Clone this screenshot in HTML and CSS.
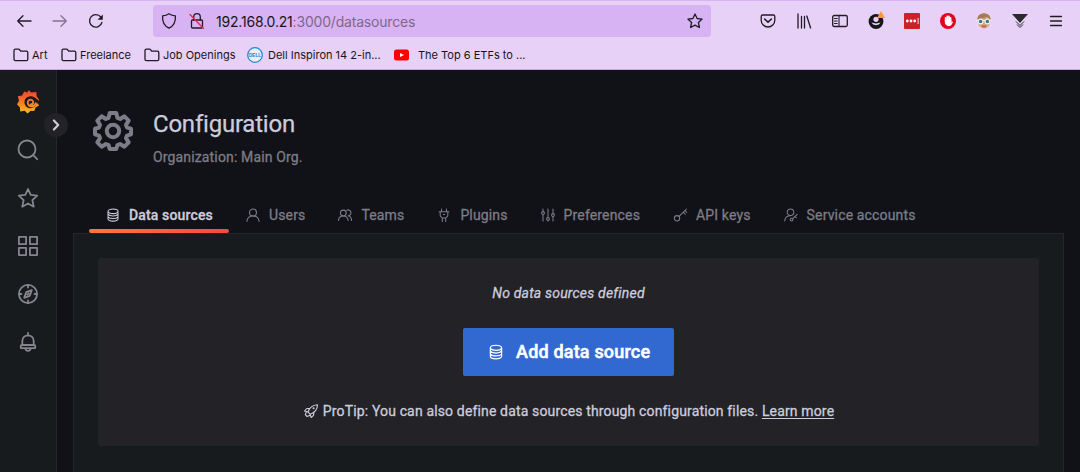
FILE: index.html
```html
<!DOCTYPE html>
<html lang="en">
<head>
<meta charset="utf-8">
<title>Configuration: Data sources</title>
<link rel="stylesheet" href="styles.css">
</head>
<body>
<svg class="defs" width="0" height="0">
  <symbol id="database" viewBox="0 0 16 16"><path d="M3 4.300C3 3 5.200 2 8 2s5 1 5 2.300-2.200 2.300-5 2.300-5-1-5-2.300zM3 4.300v7.500C3 13.100 5.200 14.100 8 14.100s5-1 5-2.300V4.300M3 7.200c.8 1 2.700 1.700 5 1.700s4.200-.7 5-1.700M3 9.800c.8 1 2.700 1.700 5 1.700s4.200-.7 5-1.700"/></symbol>
  <symbol id="folder" viewBox="0 0 16 14"><path d="M1 11.200V2.600C1 1.700 1.600 1.200 2.400 1.200h3.200c.5 0 .8.2 1.100.6l.9 1.300h5.800c.8 0 1.400.6 1.400 1.400v6.700c0 .8-.6 1.400-1.400 1.400H2.400c-.8 0-1.400-.6-1.400-1.400z"/></symbol>
</svg>

<header class="browser">
  <div class="toolbar">
    <nav class="history">
      <svg class="ic" width="16" height="16" viewBox="0 0 16 16"><path d="M15 8H1.700M7 2.700L1.700 8 7 13.300"/></svg>
      <svg class="ic faded" width="16" height="16" viewBox="0 0 16 16"><path d="M1 8h13.300M9 2.700L14.300 8 9 13.300"/></svg>
      <svg class="ic" width="16" height="16" viewBox="0 0 16 16"><path d="M13.900 9.500A6.300 6.300 0 1 1 12.800 4"/><path class="solid" d="M14.800 1.500v5.200H9.600z"/></svg>
    </nav>
    <div class="urlbar">
      <svg class="ic" width="16" height="16" viewBox="0 0 16 16"><path d="M8 .8c2 1.400 4 2 6.400 2.100.4 5.500-1.500 10-6.400 12.300C3.100 12.900 1.200 8.400 1.600 2.900 4 2.800 6 2.200 8 .8z"/></svg>
      <svg class="ic lock" width="16" height="16" viewBox="0 0 16 16"><rect x="2.500" y="7" width="11" height="8" rx="1"/><path d="M4.700 7V4a3.300 3.300 0 0 1 6.600 0v3"/><path class="slash" d="M1 1.500l13.500 14"/></svg>
      <span class="url"><b>192.168.0.21</b>:3000/datasources</span>
      <svg class="ic star" width="16" height="16" viewBox="0 0 16 16"><path d="M8 1l2.100 4.500 5 .6-3.700 3.400 1 5L8 12.100l-4.400 2.400 1-5L.9 6.100l5-.6z"/></svg>
    </div>
    <div class="extensions">
      <svg class="ic" width="16" height="16" viewBox="0 0 16 16"><path d="M2.600 2h10.800c.8 0 1.400.6 1.400 1.400v3.800a6.800 6.800 0 0 1-13.600 0V3.400C1.200 2.600 1.800 2 2.600 2z"/><path d="M4.600 6L8 9.200 11.400 6" stroke-width="1.600"/></svg>
      <svg class="ic" width="16" height="16" viewBox="0 0 16 16"><path d="M2 1v14M5.500 3.500V15M8.500 3.500V15M10.800 3l3.800 12"/></svg>
      <svg class="ic" width="16" height="16" viewBox="0 0 16 16"><rect x=".7" y="2.500" width="14.600" height="11" rx="1.500"/><path d="M7 2.500v11M2.500 5.500h2.700M2.500 8h2.700M2.500 10.500h2.700" stroke-width="1.100"/></svg>
      <svg class="account" width="18" height="18" viewBox="0 0 18 18"><circle cx="9" cy="10.500" r="7.400" fill="#18141c"/><circle cx="9" cy="8.300" r="2.600" fill="#e8d1f6"/><path d="M4.400 11.600l4.600.9 4.600-.9a4.900 4 0 0 1-9.200 0z" fill="#e8d1f6"/><path d="M14 0l4 7H10z" fill="#ff9637"/></svg>
      <svg width="16" height="16" viewBox="0 0 16 16"><rect width="16" height="16" rx="1" fill="#cb2128"/><g fill="#fff"><circle cx="3.300" cy="8" r="1.400"/><circle cx="7" cy="8" r="1.400"/><circle cx="10.700" cy="8" r="1.400"/><path d="M13.700 5h.8v6h-.8z"/></g></svg>
      <svg width="16" height="16" viewBox="0 0 16 16"><circle cx="8" cy="8" r="8" fill="#df0620"/><path d="M5.600 8V4.700M7.300 8V3.300M9 8V3.300M10.600 9V4.700" stroke="#fff" stroke-width="1.600" stroke-linecap="round"/><path d="M4.800 7h6.600v2.700l.9-1.200.8.600-1.900 3.200c-.9 1-3.300 1.100-4.400.3-1.400-.9-2-2.100-2-3.600z" fill="#fff"/></svg>
      <svg width="16" height="16" viewBox="0 0 16 16"><path d="M8 .5c4 0 6.500 2.500 6.500 6.500 0 4.800-3 8.500-6.500 8.500S1.500 11.800 1.500 7C1.500 3 4 .5 8 .5z" fill="#d99a78"/><path d="M1.500 6.500C1.500 2.500 4 .5 8 .5s6.500 2 6.500 6L11 3.800 7 5z" fill="#a57b55"/><path d="M.5 7.500h15" stroke="#eee9e8"/><circle cx="4.600" cy="8.500" r="2.400" fill="#387d86" stroke="#edf2ed" stroke-width="1.200"/><circle cx="11.400" cy="8.500" r="2.400" fill="#387d86" stroke="#edf2ed" stroke-width="1.200"/><path d="M6 13q2 1 4 0" fill="none" stroke="#954e48"/></svg>
      <svg width="16" height="16" viewBox="0 0 16 16"><path d="M0 1h16L8 10z" fill="#2a292d"/><path d="M4 8.500l4 4 4-4M5 11.500l3 3 3-3" fill="none" stroke="#343038"/></svg>
      <svg class="ic" width="16" height="16" viewBox="0 0 16 16"><path d="M2.500 3.500h11M2.500 8h11M2.500 12.500h11"/></svg>
    </div>
  </div>
  <div class="bookmarks">
    <a class="bm art"><svg class="ic" width="16" height="14"><use href="#folder"/></svg><span>Art</span></a>
    <a class="bm free"><svg class="ic" width="16" height="14"><use href="#folder"/></svg><span>Freelance</span></a>
    <a class="bm jobs"><svg class="ic" width="16" height="14"><use href="#folder"/></svg><span>Job Openings</span></a>
    <a class="bm dell"><svg width="16" height="16" viewBox="0 0 16 16"><circle cx="8" cy="8" r="7.300" fill="#e8eefb" stroke="#2588c8" stroke-width="1.300"/><text class="dell-logo" x="8" y="10" text-anchor="middle" textLength="12" lengthAdjust="spacingAndGlyphs">DELL</text></svg><span>Dell Inspiron 14 2-in...</span></a>
    <a class="bm tube"><svg width="15" height="16" viewBox="0 0 15 16"><rect y="2.500" width="15" height="11" rx="2.500" fill="#f00"/><path d="M6 6l4 2-4 2z" fill="#fff"/></svg><span>The Top 6 ETFs to ...</span></a>
  </div>
</header>

<div class="app">
  <aside class="sidebar">
    <svg class="logo" width="24" height="26" viewBox="0 0 24 26">
      <defs><linearGradient id="flame" gradientUnits="userSpaceOnUse" x1="0" y1="1" x2="0" y2="25"><stop offset="0" stop-color="#f0402c"/><stop offset=".5" stop-color="#f5782b"/><stop offset="1" stop-color="#fcc21d"/></linearGradient></defs>
      <path fill="url(#flame)" d="M12.800 1l2.300 2.400 5.200-.4.400 4.400 2.300 3-.3 2-.6 2.400.9 2-3.300 1.500-1.500 3.700-3.600-.2-3 2.700-2.900-2.700-4.500.8-.3-4.200L1 15.200l2-3.500L1.800 7.300l4.300-.7L8.200 2.500l3 1.100z"/>
      <path fill="#181b1e" d="M23.500 12.600C21 9.800 18.400 7.200 14.500 7.200a6 6 0 1 0 5.800 7.200l3.200.2z"/>
      <path fill="none" stroke="url(#flame)" stroke-width="1.900" stroke-linecap="round" d="M14.700 15.400c1.500.1 2.600-1 2.500-2.400-.2-1.600-1.500-2.400-3-2.200-1.800.3-2.800 1.900-2.400 3.600.5 2 2.200 3.200 4.300 2.900 2-.3 3.300-1.500 3.800-3.200"/>
    </svg>
    <svg class="nav" width="24" height="24" viewBox="0 0 24 24"><circle cx="11" cy="11" r="8.500"/><path d="M17.200 17.200l4 4"/></svg>
    <svg class="nav" width="24" height="24" viewBox="0 0 24 24"><path d="M12 3l2.700 5.900 6.500.8-4.800 4.500 1.300 6.500-5.700-3.200-5.700 3.200 1.300-6.500-4.800-4.500 6.500-.8z"/></svg>
    <svg class="nav" width="24" height="24" viewBox="0 0 24 24"><path d="M2.900 2.900h7.200v7.200H2.900zM13.900 2.900h7.200v7.200h-7.200zM2.900 13.900h7.200v7.200H2.900zM13.900 13.900h7.200v7.200h-7.200z"/></svg>
    <svg class="nav" width="24" height="24" viewBox="0 0 24 24"><circle cx="12" cy="12" r="9.100"/><path d="M12 3v2.500M12 18.500V21M3 12h2.500M18.500 12H21M15.800 8.200l-2 5.600-5.600 2 2-5.600zM11.300 12.700l1.400-1.400"/></svg>
    <svg class="nav" width="24" height="24" viewBox="0 0 24 24"><path d="M12 3v2.500M6.300 15V11a5.700 5.700 0 0 1 11.400 0v4M5.900 15h12.200c.6 0 1.100.5 1.100 1.100v2H4.800v-2c0-.6.500-1.100 1.100-1.100zM9.200 18.500c.5 1.600 1.600 2.300 2.800 2.300s2.300-.7 2.800-2.300"/></svg>
    <button class="expand"><svg width="24" height="24" viewBox="0 0 24 24"><path d="M9.900 7.500l4.300 4.500-4.300 4.500" fill="none" stroke="#ccccdc" stroke-width="2.200" stroke-linecap="round" stroke-linejoin="round"/></svg></button>
  </aside>

  <main class="content">
    <div class="page-header">
      <svg class="gear" width="40" height="40" viewBox="0 0 40 40"><path d="M16.700 2h6.600l1.100 4.900 2.700 1.100 4.300-2.700 4.300 4.300-2.700 4.300 1.100 2.700 3.900 1.100v5.600L34 24.600l-1 2.500 2.700 4.300-4.300 4.300-4.300-2.700-2.700 1.100-1.100 3.900h-6.600l-1.100-3.900-2.700-1.100-4.300 2.700-4.300-4.300L7 27.100l-1-2.500-4-1.300v-5.600l4-1.100 1-2.700-2.700-4.300 4.300-4.300L12.900 8l2.700-1.100z"/><circle cx="20" cy="20" r="6.200"/></svg>
      <div class="heading"><h1>Configuration</h1><p>Organization: Main Org.</p></div>
    </div>
    <nav class="tabs">
      <a class="tab active"><svg width="16" height="16"><use href="#database"/></svg><span>Data sources</span></a>
      <a class="tab"><svg width="16" height="16" viewBox="0 0 16 16"><circle cx="8" cy="5.500" r="3.500"/><path d="M1.900 14.500C2.200 11.300 4.700 9 8 9s5.800 2.300 6.100 5.500"/></svg><span>Users</span></a>
      <a class="tab"><svg width="16" height="16" viewBox="0 0 16 16"><circle cx="6.300" cy="6" r="2.900"/><path d="M1.500 13.500c.2-2.700 2.200-4.600 4.800-4.600s4.600 1.900 4.800 4.600M9.800 3.200a2.900 2.900 0 1 1 1.300 5.500c2.100.4 3.400 2.300 3.500 4.800"/></svg><span>Teams</span></a>
      <a class="tab"><svg width="16" height="16" viewBox="0 0 16 16"><path d="M5.500 2v2.700M10.500 2v2.700M3 4.700h10M4.200 4.700v4.100l2 2.200h3.600l2-2.200V4.700M6.300 11v3.500M9.700 11v3.500M7.300 7.500h1.400"/></svg><span>Plugins</span></a>
      <a class="tab"><svg width="16" height="16" viewBox="0 0 16 16"><path d="M3 2v2.500M3 7.500V14M8 2v8.500M8 13v1M13 2v4.500M13 9.500V14"/><circle cx="3" cy="6" r="1.400"/><circle cx="8" cy="12" r="1.400"/><circle cx="13" cy="8" r="1.400"/></svg><span>Preferences</span></a>
      <a class="tab"><svg width="16" height="16" viewBox="0 0 16 16"><circle cx="5" cy="11.300" r="2.700"/><path d="M7 9.400L14.500 2M11.200 5.200l2 2M13 3.500l1.800 1.800"/></svg><span>API keys</span></a>
      <a class="tab"><svg width="16" height="16" viewBox="0 0 16 16"><circle cx="7.500" cy="5.300" r="3.300"/><path d="M1.700 14c.3-2.900 2.100-5.100 5-5.300M9.500 11.700l4.700-4.400M12.100 9.400l1.300 1.400"/><circle cx="8.600" cy="12.600" r="1.400"/></svg><span>Service accounts</span></a>
    </nav>
    <section class="panel">
      <div class="empty">
        <em>No data sources defined</em>
        <a class="add"><svg width="18" height="18" viewBox="0 0 16 16"><use href="#database" width="16" height="16"/></svg><span>Add data source</span></a>
        <p class="tip"><svg width="16" height="16" viewBox="0 0 16 16"><path d="M5 9C6.200 5 9.300 2 14.500 1.700c-.1 4.800-2.900 8-7.300 9.600zM7 5.200l-3.200.3L1.500 8l3.500 1M11 8.900l-.5 3.400-2.400 2.200-.9-3.200M3.500 8.600l-1.200 3 1.800 1.900 3.100-1.200"/><circle cx="10.600" cy="5.300" r=".5"/></svg><span>ProTip: You can also define data sources through configuration files. <a class="learn">Learn more</a></span></p>
      </div>
    </section>
  </main>
</div>
</body>
</html>
```
FILE: styles.css
```css
* { box-sizing: border-box; }
body { margin: 0; width: 1080px; height: 472px; overflow: hidden; background: #111217; color: #ccccdc; font-family: Roboto, sans-serif; }
svg { display: block; flex: none; }
.defs { position: absolute; }

/* Browser chrome */
.browser { height: 70px; background: #e8d1f6; border-top: 1px solid #d8b3f3; border-bottom: 1px solid #c8a9dc; font-family: Inter, sans-serif; color: #18141c; }
.toolbar { display: flex; height: 40px; align-items: center; }
.ic { fill: none; stroke: #211b26; stroke-width: 1.3; stroke-linecap: round; stroke-linejoin: round; }
.ic .solid { fill: #211b26; stroke: none; }
.faded { opacity: .5; }
.history { display: flex; gap: 20px; padding-left: 16px; width: 153px; }
.urlbar { display: flex; align-items: center; width: 558px; height: 32px; padding: 0 8px; background: #d8b3f3; border-radius: 4px; }
.lock { margin-left: 12px; }
.lock .slash { stroke: #e22850; }
.url { margin-left: 11px; font-size: 14px; letter-spacing: -0.19px; color: #7f668e; white-space: nowrap; }
.url b { font-weight: 400; color: #18141c; }
.star { margin-left: auto; }
.extensions { display: flex; align-items: center; justify-content: space-between; width: 304px; margin-left: 49px; }
.account { margin: -3px -1px 0; }
.bookmarks { display: flex; height: 27px; align-items: center; padding-left: 13px; font-size: 11px; }
.bm { display: flex; align-items: center; white-space: nowrap; }
.bm span { margin-left: 3px; }
.art { width: 48px; }
.free { width: 83px; }
.jobs { width: 103px; }
.dell { width: 147px; }
.bm.dell span { margin-left: 5px; }
.bm.tube span { margin-left: 9px; }
.dell-logo { font: 700 5px "Liberation Sans", sans-serif; fill: #1680c4; }

/* Application */
.app { display: flex; height: 402px; }
.sidebar { position: relative; display: flex; flex-direction: column; align-items: center; gap: 24px; width: 57px; padding-top: 19px; background: #181b1e; border-right: 1px solid #25262b; }
.logo { margin-bottom: -1px; }
.nav { fill: none; stroke: #85848f; stroke-width: 1.8; stroke-linecap: round; stroke-linejoin: round; }
.expand { position: absolute; left: 44px; top: 43px; width: 24px; height: 24px; padding: 0; border: 0; border-radius: 50%; background: #222227; }
.content { width: 1023px; padding: 37px 16px 0; }
.page-header { display: flex; height: 90px; padding-left: 20px; }
.gear { margin-top: 4px; fill: none; stroke: #7d7c87; stroke-width: 4; stroke-linejoin: round; }
.heading { margin-left: 20px; padding-top: 1px; }
h1 { margin: 0; font-size: 24px; line-height: 32px; font-weight: 400; letter-spacing: -.22px; -webkit-text-stroke: .25px currentColor; }
p { margin: 0; }
.heading p { margin-top: 8px; font-size: 14px; line-height: 18px; letter-spacing: .15px; color: #7d7c87; -webkit-text-stroke: .3px currentColor; }
.tabs { display: flex; height: 36px; padding-left: 16px; }
.tab { position: relative; display: flex; align-items: center; gap: 8px; padding: 0 16px; font-size: 14px; letter-spacing: .15px; color: #7d7c87; white-space: nowrap; -webkit-text-stroke: .3px currentColor; }
.tab svg { stroke: currentColor; fill: none; stroke-width: 1.05; stroke-linecap: round; stroke-linejoin: round; }
.active { color: #ccccdc; font-weight: 500; }
.active::after { content: ""; position: absolute; left: 0; right: 0; bottom: 0; height: 4px; border-radius: 2px; background: linear-gradient(90deg, #ff7934, #f24c3d); }
.panel { height: 260px; padding: 24px; background: #181b1e; border: 1px solid #25262b; }
.empty { display: flex; flex-direction: column; align-items: center; height: 188px; padding-top: 26px; border-radius: 3px; background: #222227; }
.empty em { font-size: 14px; line-height: 18px; letter-spacing: .2px; -webkit-text-stroke: .3px currentColor; }
.add { display: flex; align-items: center; width: 211px; height: 48px; margin-top: 26px; padding-left: 24px; background: #3169d0; border-radius: 2px; color: #fff; font-size: 18px; font-weight: 500; letter-spacing: .19px; -webkit-text-stroke: .5px currentColor; }
.add svg { fill: none; stroke: #fff; stroke-width: 1.1; }
.add span { margin-left: 11px; padding-bottom: 2px; white-space: nowrap; }
.tip { display: flex; align-items: center; gap: 4px; margin-top: 26px; font-size: 14px; line-height: 18px; letter-spacing: .15px; white-space: nowrap; -webkit-text-stroke: .3px currentColor; }
.tip svg { fill: none; stroke: #ccccdc; stroke-width: 1.1; stroke-linejoin: round; }
.learn { text-decoration: underline; text-underline-offset: 2px; }
```
